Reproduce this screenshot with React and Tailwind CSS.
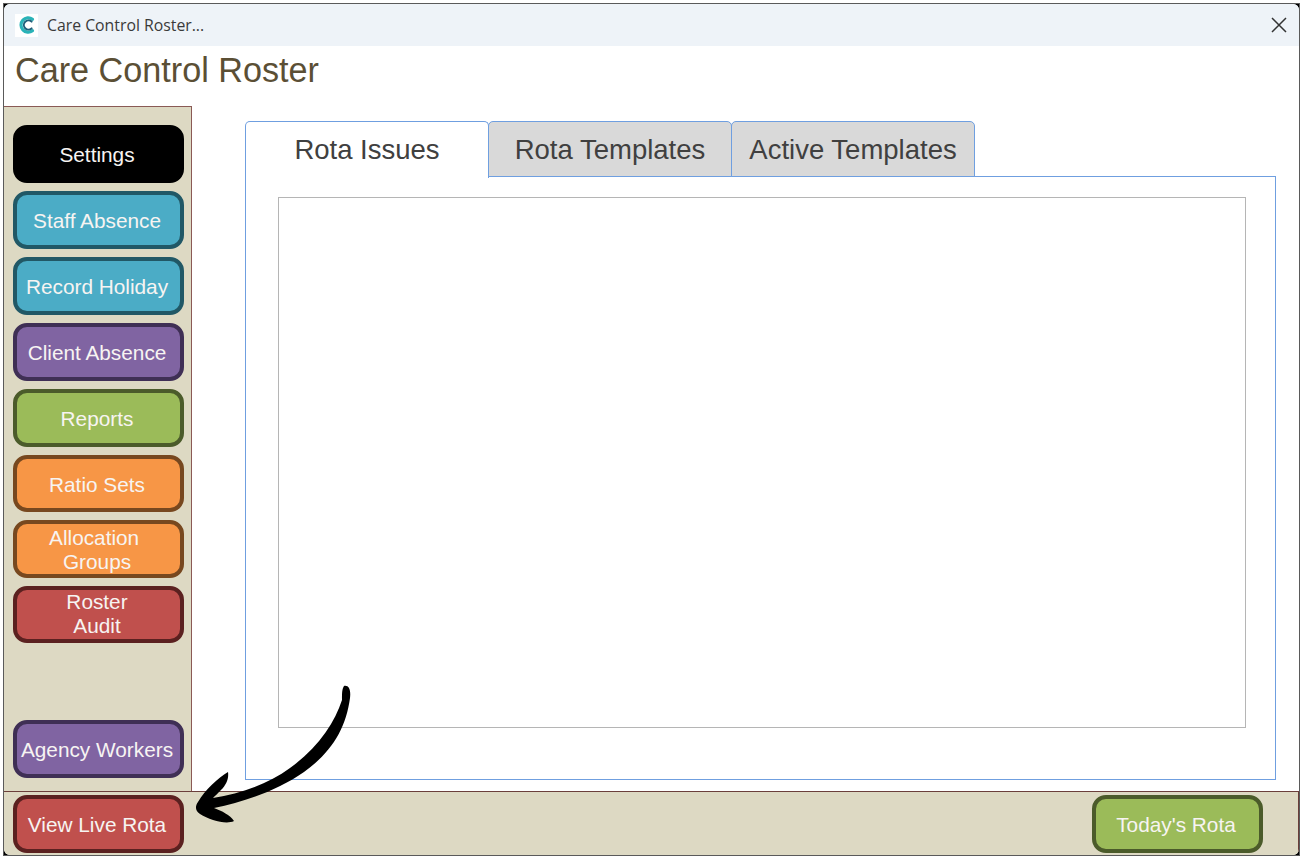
const font = { fontFamily: '"Liberation Sans", Arial, sans-serif' };

function Btn({ label, bg, border, h = "h-[58px]", pt = "pt-[2px]", className = "" }) {
  return (
    <button className={`${h} ${pt} w-[171px] shrink-0 rounded-[14px] border-[4px] pr-[3px] ${bg} ${border} text-[20.8px] leading-[24px] text-[#f7f4f2] ${className}`}>
      {label}
    </button>
  );
}

const BLUE = "bg-[#4bacc6]";
const BLUE_B = "border-[#215866]";
const PURPLE = "bg-[#8064a2]";
const PURPLE_B = "border-[#3f2f55]";
const ORANGE = "bg-[#f79646]";
const ORANGE_B = "border-[#77481f]";
const RED = "bg-[#c0504d]";
const RED_B = "border-[#5b2120]";
const GREEN = "bg-[#9bbb59]";
const GREEN_B = "border-[#4b5b2a]";

function Tab({ label, active, w }) {
  return active ? (
    <div className={`${w} h-[57px] z-10 relative rounded-t-[5px] border border-b-0 border-[#6f9fe0] bg-white flex items-center justify-center text-[27.5px] text-[#404040]`}>
      {label}
    </div>
  ) : (
    <div className={`${w} h-[56px] -ml-px rounded-t-[5px] border border-[#6f9fe0] bg-[#d9d9d9] pt-[2px] flex items-center justify-center text-[27.5px] text-[#404040]`}>
      {label}
    </div>
  );
}

export default function App() {
  return (
    <div className="relative h-[859px] w-[1303px] overflow-hidden bg-white p-[3px]" style={font}>
      <div className="h-full w-full overflow-hidden border border-[#5a5a5a] bg-black">
        <div className="relative flex h-full w-full flex-col overflow-hidden rounded-[6px] bg-white">
          <div className="flex h-[42px] shrink-0 items-center justify-between bg-[#eef3f8] pl-[11px] pr-[12px]">
            <div className="flex items-center gap-[9px]">
              <div className="flex h-[23px] w-[23px] items-center justify-center bg-white">
                <svg width="18" height="20" viewBox="0 0 18 20" fill="none">
                  <path d="M14.5 4.2A7.2 7.2 0 1 0 14.5 15.8" stroke="#2ab3b8" strokeWidth="3.2" strokeLinecap="round" />
                  <path d="M13.6 6.6A4.6 4.6 0 1 0 13.6 13.4" stroke="#1f5f7a" strokeWidth="2" strokeLinecap="round" />
                </svg>
              </div>
              <span className="pt-[1px] text-[15.8px] text-[#3a3a3a]" style={{ fontFamily: '"Open Sans", sans-serif' }}>Care Control Roster...</span>
            </div>
            <svg width="16" height="16" viewBox="0 0 16 16" stroke="#333" strokeWidth="1.5" fill="none">
              <path d="M1 1 15 15M15 1 1 15" />
            </svg>
          </div>

          <div className="flex h-[60px] shrink-0 items-start pl-[11px] pt-[3px]">
            <span className="text-[34.2px] leading-[42px] text-[#5b4f35]">Care Control Roster</span>
          </div>

          <div className="flex min-h-0 flex-1">
            <aside className="flex w-[188px] shrink-0 flex-col items-start gap-[8px] border-r border-t border-[#8a5a55] bg-[#ddd9c3] pb-[13px] pl-[9px] pt-[18px]">
              <Btn label="Settings" bg="bg-black" border="border-black" />
              <Btn label="Staff Absence" bg={BLUE} border={BLUE_B} />
              <Btn label="Record Holiday" bg={BLUE} border={BLUE_B} />
              <Btn label="Client Absence" bg={PURPLE} border={PURPLE_B} />
              <Btn label="Reports" bg={GREEN} border={GREEN_B} />
              <Btn label="Ratio Sets" bg={ORANGE} border={ORANGE_B} h="h-[57px]" />
              <Btn label={<>Allocation&nbsp;<br />Groups</>} bg={ORANGE} border={ORANGE_B} />
              <Btn label={<>Roster<br />Audit</>} bg={RED} border={RED_B} h="h-[57px]" pt="pt-0" className="pb-[2px]" />
              <Btn label="Agency Workers" bg={PURPLE} border={PURPLE_B} className="mt-auto" />
            </aside>

            <main className="min-w-0 flex-1 pl-[53px] pr-[23px] pt-[15px]">
              <div className="flex h-[55px] items-start">
                <Tab label="Rota Issues" active w="w-[244px]" />
                <Tab label="Rota Templates" w="w-[244px]" />
                <Tab label="Active Templates" w="w-[244px]" />
              </div>
              <div className="h-[604px] border border-[#6f9fe0] bg-white pl-[32px] pr-[29px] pt-[20px]">
                <div className="h-[531px] border border-[#b5b5b5] bg-white" />
              </div>
            </main>
          </div>

          <footer className="flex h-[64px] shrink-0 items-start justify-between border-t border-r border-[#6b3f3b] bg-[#ddd9c3] pl-[9px] pr-[35px] pt-[3px]">
            <Btn label="View Live Rota" bg={RED} border={RED_B} />
            <Btn label="Today's Rota" bg={GREEN} border={GREEN_B} />
          </footer>
        </div>
      </div>

      <svg className="absolute left-0 top-0" width="1303" height="859" viewBox="0 0 1303 859" fill="none">
        <path
          d="M344 686C349 685 351 690 350 698C346 728 332 752 304 772C278 790 245 802 214 808C222 811 230 815 234 821C226 825 210 820 200 814C195 811 195 806 198 802C205 790 218 778 228 772C229 779 226 785 221 790C218 793 215 796 213 798C240 794 268 784 290 768C318 748 335 722 342 700C342 693 342 689 344 686Z"
          fill="#000"
        />
      </svg>
    </div>
  );
}
